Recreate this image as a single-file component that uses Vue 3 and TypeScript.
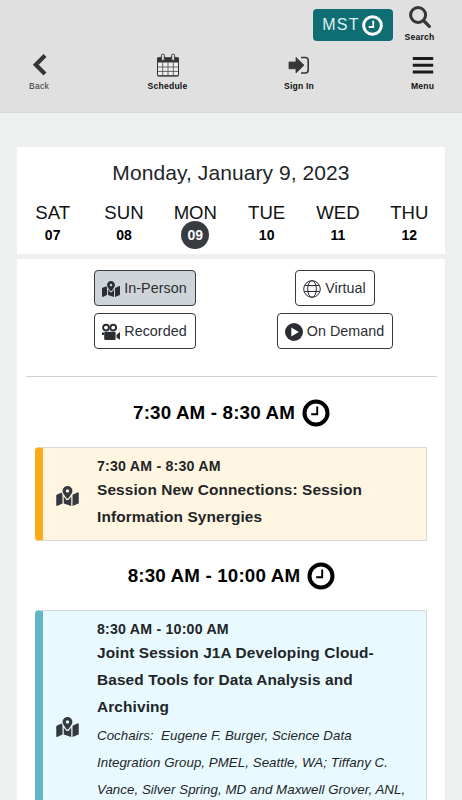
<script setup lang="ts">
interface Day { name: string; num: string; active?: boolean }
interface Filter { label: string; icon: 'map' | 'globe' | 'camera' | 'play'; active?: boolean }
interface Session { slot: string; time: string; tone: string; title: string[]; chairs: string[] }

const days: Day[] = [
  { name: 'SAT', num: '07' },
  { name: 'SUN', num: '08' },
  { name: 'MON', num: '09', active: true },
  { name: 'TUE', num: '10' },
  { name: 'WED', num: '11' },
  { name: 'THU', num: '12' },
]

const filters: Filter[] = [
  { label: 'In-Person', icon: 'map', active: true },
  { label: 'Virtual', icon: 'globe' },
  { label: 'Recorded', icon: 'camera' },
  { label: 'On Demand', icon: 'play' },
]

const sessions: Session[] = [
  {
    slot: '7:30 AM - 8:30 AM',
    time: '7:30 AM - 8:30 AM',
    tone: 'amber',
    title: ['Session New Connections: Session', 'Information Synergies'],
    chairs: [],
  },
  {
    slot: '8:30 AM - 10:00 AM',
    time: '8:30 AM - 10:00 AM',
    tone: 'teal',
    title: ['Joint Session J1A Developing Cloud-', 'Based Tools for Data Analysis and', 'Archiving'],
    chairs: [
      'Cochairs:\u00a0 Eugene F. Burger, Science Data',
      'Integration Group, PMEL, Seattle, WA; Tiffany C.',
      'Vance, Silver Spring, MD and Maxwell Grover, ANL,',
    ],
  },
]

const mapPath =
  'M288 0c-69.59 0-126 56.41-126 126 0 56.26 82.35 158.8 113.9 196.02 6.39 7.54 17.82 7.54 24.2 0C331.65 284.8 414 182.26 414 126 414 56.41 357.59 0 288 0zm0 168c-23.2 0-42-18.8-42-42s18.8-42 42-42 42 18.8 42 42-18.8 42-42 42zM20.12 215.95A32.006 32.006 0 0 0 0 245.66v250.32c0 11.32 11.43 19.06 21.94 14.86L160 448V214.92c-8.84-15.98-16.07-31.54-21.25-46.42L20.12 215.95zM288 359.67c-14.07 0-27.38-6.18-36.51-16.96-19.66-23.2-40.57-49.62-59.49-76.72v182l192 64V266c-18.92 27.09-39.82 53.52-59.49 76.72-9.13 10.77-22.44 16.95-36.51 16.95zm266.06-198.51L416 224v288l139.88-55.95A31.996 31.996 0 0 0 576 426.34V176.02c0-11.32-11.43-19.06-21.94-14.86z'
</script>

<template>
  <div class="page">
    <header class="header">
      <div class="top-row">
        <button class="zone">
          <span>MST</span>
          <svg class="zone-clock" viewBox="0 0 28 28">
            <circle cx="14" cy="14" r="11.8" fill="none" stroke="currentColor" stroke-width="4" />
            <path d="M15 7.5V16H9" fill="none" stroke="currentColor" stroke-width="2.4" />
          </svg>
        </button>
        <a class="nav search">
          <svg class="search-icon" viewBox="0 0 22 22">
            <circle cx="9.1" cy="9" r="7.5" fill="none" stroke="currentColor" stroke-width="3" />
            <path d="M14.5 14.5L20.3 20.3" stroke="currentColor" stroke-width="3.2" stroke-linecap="round" />
          </svg>
          <span>Search</span>
        </a>
      </div>
      <nav class="nav-row">
        <a class="nav back">
          <svg class="nav-icon" viewBox="0 0 24 24">
            <path d="M18 2.6L8.8 11.8L18 21" fill="none" stroke="currentColor" stroke-width="4.2" />
          </svg>
          <span>Back</span>
        </a>
        <a class="nav">
          <svg class="nav-icon" viewBox="0 0 24 24">
            <rect x="1.5" y="5" width="21" height="18" rx="1" fill="#eee" stroke="currentColor" />
            <path d="M1 9.5V5.5Q1 4.2 2.3 4.2H21.7Q23 4.2 23 5.5V9.5Z" fill="currentColor" />
            <path d="M6.7 9.5V23M12 9.5V23M17.3 9.5V23M2 14H22M2 18.4H22" stroke="#555" stroke-width=".9" />
            <path d="M1.5 22.8H22.5" stroke="currentColor" />
            <rect x="5.4" y="1.2" width="3" height="6.2" rx="1.2" fill="#e0e0e0" stroke="currentColor" />
            <rect x="15.6" y="1.2" width="3" height="6.2" rx="1.2" fill="#e0e0e0" stroke="currentColor" />
          </svg>
          <span>Schedule</span>
        </a>
        <a class="nav">
          <svg class="nav-icon" viewBox="0 0 24 24">
            <path d="M2 9H9V4.4L17 12.2L9 20V15.8H2Z" fill="currentColor" stroke="currentColor" stroke-width=".8" stroke-linejoin="round" />
            <path d="M14 4.5H18.2Q21.2 4.5 21.2 7.5V17Q21.2 20 18.2 20H14" fill="none" stroke="currentColor" stroke-width="1.6" />
          </svg>
          <span>Sign In</span>
        </a>
        <a class="nav menu">
          <svg class="nav-icon" viewBox="0 0 24 24">
            <path d="M1.8 5.5H22.2M1.8 12.3H22.2M1.8 19.1H22.2" stroke="currentColor" stroke-width="3" />
          </svg>
          <span>Menu</span>
        </a>
      </nav>
    </header>

    <main class="content">
      <section class="dates">
        <h1 class="date-title">Monday, January 9, 2023</h1>
        <div class="days">
          <div v-for="d in days" :key="d.num" class="day">
            <span class="day-name">{{ d.name }}</span>
            <span class="day-num" :class="{ active: d.active }">{{ d.num }}</span>
          </div>
        </div>
      </section>

      <section class="schedule">
        <div class="filters">
          <div v-for="f in filters" :key="f.label" class="filter-cell">
            <button class="filter" :class="{ active: f.active }">
              <svg v-if="f.icon === 'map'" class="filter-icon" viewBox="0 0 576 512"><path :d="mapPath" fill="currentColor" /></svg>
              <svg v-else-if="f.icon === 'globe'" class="filter-icon" viewBox="0 0 18 18" fill="none" stroke="currentColor">
                <circle cx="9" cy="9" r="8.3" />
                <ellipse cx="9" cy="9" rx="4.3" ry="8.3" />
                <path d="M1.7 5.5H16.3M1.2 11.5H16.8" />
              </svg>
              <svg v-else-if="f.icon === 'camera'" class="filter-icon" viewBox="0 0 18 18">
                <circle cx="4" cy="4.6" r="2.9" fill="none" stroke="currentColor" stroke-width="1.9" />
                <circle cx="11.2" cy="4.6" r="2.9" fill="none" stroke="currentColor" stroke-width="1.9" />
                <path d="M0 9.5H2V12H0ZM2.8 8.8H12.8Q13.6 8.8 13.6 9.6V15.8Q13.6 17 12.6 17H3.4Q2.2 17 2.2 15.8V9.6ZM14.5 11.8L18 9V16.8L14.5 14.5Z" fill="currentColor" />
              </svg>
              <svg v-else class="filter-icon" viewBox="0 0 18 18">
                <circle cx="9" cy="9" r="9" fill="currentColor" />
                <path d="M6.3 4.4L13.8 9L6.3 13.6Z" fill="#fff" />
              </svg>
              <span>{{ f.label }}</span>
            </button>
          </div>
        </div>
        <hr class="rule" />

        <div v-for="s in sessions" :key="s.slot" class="slot">
          <h2 class="slot-title">
            <span>{{ s.slot }}</span>
            <svg class="slot-clock" viewBox="0 0 28 28">
              <circle cx="14" cy="14" r="11.5" fill="none" stroke="currentColor" stroke-width="4" />
              <path d="M15.2 7.5V15.2H9.2" fill="none" stroke="currentColor" stroke-width="1.9" />
            </svg>
          </h2>
          <article class="card" :class="s.tone">
            <div class="card-mode">
              <svg viewBox="0 0 576 512"><path :d="mapPath" fill="currentColor" /></svg>
            </div>
            <div class="card-body">
              <div class="card-time">{{ s.time }}</div>
              <h3 class="card-title"><span v-for="line in s.title" :key="line">{{ line }}</span></h3>
              <p v-if="s.chairs.length" class="card-chairs"><span v-for="line in s.chairs" :key="line">{{ line }}</span></p>
            </div>
          </article>
        </div>
      </section>
    </main>
  </div>
</template>

<style>
body {
  background: #eef0f0;
  overflow: hidden;
}
</style>

<style scoped>
* {
  box-sizing: border-box;
}
.page {
  height: 800px;
  overflow: hidden;
  background: #eef0f0;
  color: #212529;
  font-family: "Liberation Sans", Arial, sans-serif;
}
h1, h2, h3, p {
  margin: 0;
}
svg {
  display: block;
  flex: none;
}
button {
  font-family: inherit;
}
.header {
  height: 113px;
  background: #e0e0e0;
  border-bottom: 1px solid #d5d6d6;
}
.top-row {
  display: flex;
  justify-content: flex-end;
  height: 53px;
  padding: 9px 22px 0 0;
}
.zone {
  display: flex;
  align-items: center;
  justify-content: center;
  gap: 2px;
  width: 80px;
  height: 32px;
  padding: 0 1px 0 0;
  border: 0;
  border-radius: 4px;
  background: #0e6e74;
  color: #fff;
  font-size: 16px;
  letter-spacing: 1.2px;
}
.zone span {
  color: #dff0f0;
  line-height: 32px;
}
.zone-clock {
  width: 21px;
  height: 21px;
}
.nav {
  display: flex;
  flex-direction: column;
  align-items: center;
  color: #111;
  font-size: 8.6px;
  font-weight: bold;
  letter-spacing: 0.2px;
  line-height: 12px;
  white-space: nowrap;
}
.nav svg {
  color: #343638;
}
.search {
  gap: 3px;
  width: 53px;
  margin: -3px -6px 0 0;
}
.search-icon {
  width: 22px;
  height: 22px;
}
.nav-row {
  display: grid;
  grid-template-columns: 78px 179px 84px 42px 79px;
}
.nav-row .nav {
  gap: 3px;
}
.nav-icon {
  width: 24px;
  height: 24px;
}
.back {
  font-weight: normal;
  color: #333;
}
.menu {
  grid-column: 5;
}
.menu svg {
  color: #1c1c1c;
}
.content {
  padding: 34px 17px 0;
}
.dates {
  height: 107px;
  background: #fff;
  padding-top: 13px;
}
.date-title {
  color: #212529;
  font-size: 21px;
  font-weight: normal;
  letter-spacing: 0.08px;
  line-height: 26px;
  text-align: center;
}
.days {
  display: grid;
  grid-template-columns: repeat(6, 1fr);
  margin-top: 16px;
}
.day {
  display: flex;
  flex-direction: column;
  align-items: center;
}
.day-name {
  color: #111;
  font-size: 18.6px;
  line-height: 22px;
}
.day-num {
  width: 28px;
  height: 28px;
  margin-top: -3px;
  border-radius: 50%;
  color: #000;
  font-size: 14px;
  font-weight: bold;
  line-height: 28px;
  text-align: center;
}
.day-num.active {
  background: #383b40;
  color: #fff;
}
.schedule {
  margin-top: 5px;
  padding: 11px 8px 0 9px;
  background: #fff;
}
.filters {
  display: grid;
  grid-template-columns: 238px 142px;
  row-gap: 7px;
}
.filter-cell {
  display: flex;
  justify-content: center;
}
.filter {
  display: flex;
  align-items: center;
  height: 36px;
  padding: 0 8px 0 7px;
  gap: 4px;
  border: 1px solid #343a40;
  border-radius: 4px;
  background: #fff;
  color: #2a2e33;
  font-size: 14.3px;
  letter-spacing: 0.05px;
  white-space: nowrap;
}
.filter.active {
  background: #ced4d8;
}
.filter-icon {
  width: 18px;
  height: 18px;
  margin-top: 2px;
}
.rule {
  height: 1px;
  margin: 27px 0 1px;
  border: 0;
  background: #cdd3d3;
}
.slot-title {
  display: flex;
  align-items: center;
  justify-content: center;
  gap: 7px;
  height: 69px;
  color: #000;
  font-size: 18.8px;
  letter-spacing: 0.15px;
}
.slot-clock {
  width: 28px;
  height: 28px;
  margin-top: 1px;
}
.card {
  display: flex;
  margin: 0 10px 0 9px;
  border: 1px solid #d8dad7;
  border-left: 8px solid;
  border-radius: 4px 0 0 4px;
}
.amber {
  height: 94px;
  border-left-color: #fdaa19;
  background: #fff5e0;
}
.teal {
  height: 230px;
  border-left-color: #63b6ca;
  background: #e9faff;
}
.card-mode {
  display: flex;
  align-items: center;
  width: 54px;
  padding: 4px 0 0 12.5px;
  color: #343a40;
}
.card-mode svg {
  width: 23px;
  height: 20px;
}
.card-time {
  padding: 9px 0 1px;
  font-size: 14.2px;
  font-weight: bold;
  letter-spacing: 0.2px;
  line-height: 18px;
}
.card-title {
  font-size: 15.4px;
  letter-spacing: 0.13px;
  line-height: 27px;
}
.card-title span,
.card-chairs span {
  display: block;
  white-space: nowrap;
}
.card-chairs {
  padding-top: 2px;
  font-size: 13.3px;
  font-style: italic;
  letter-spacing: 0.05px;
  line-height: 27px;
}
</style>
